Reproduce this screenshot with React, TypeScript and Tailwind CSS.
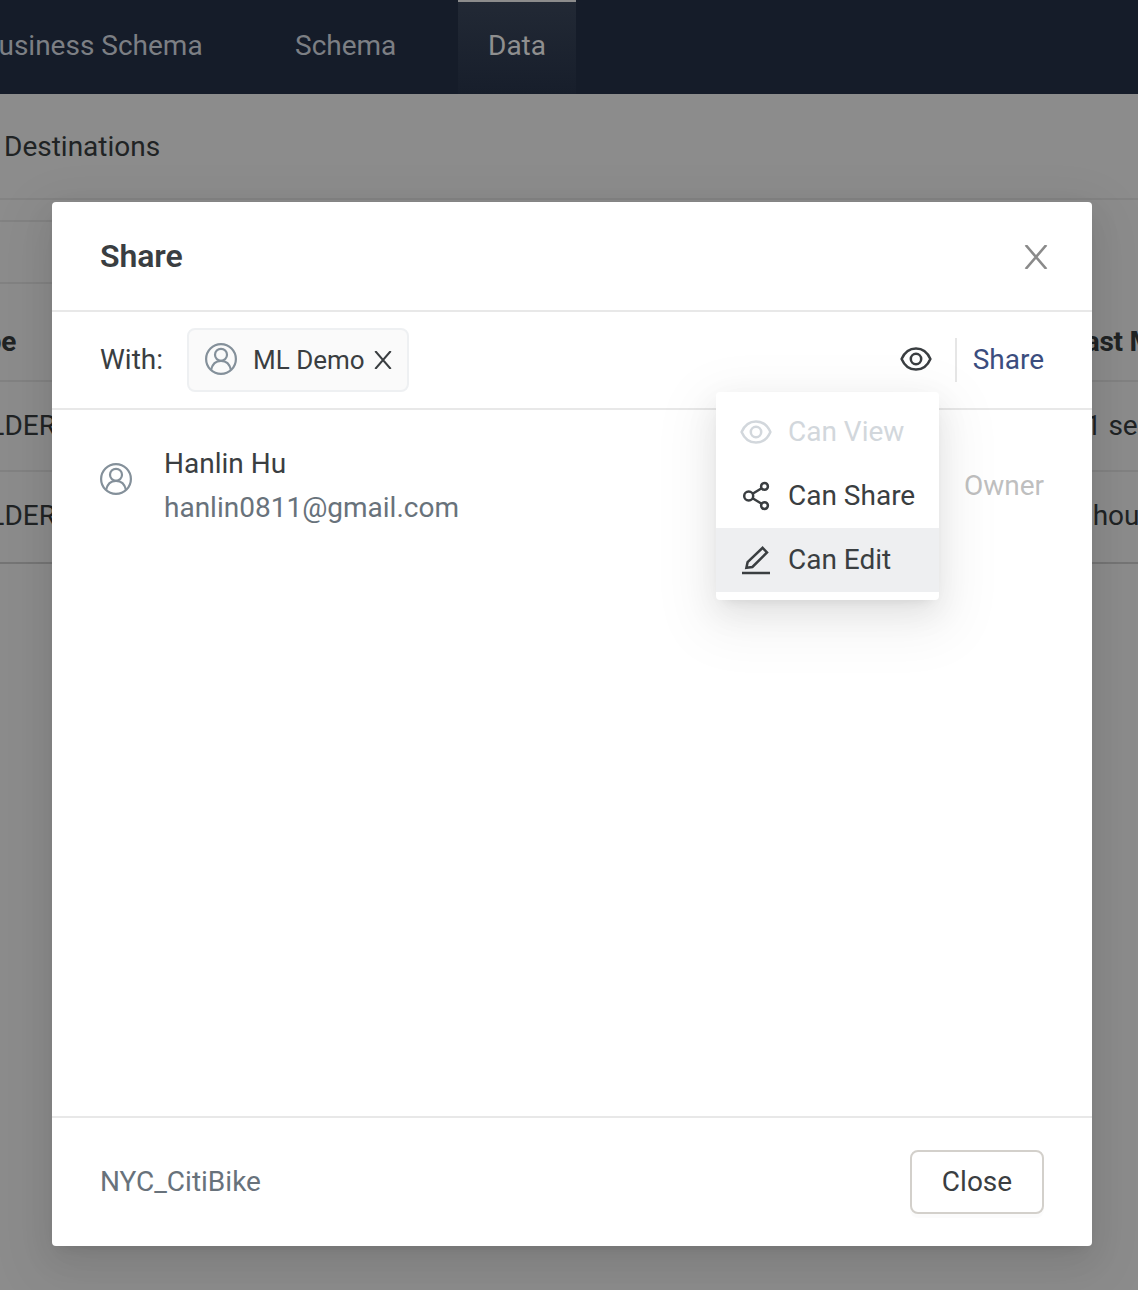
import React from "react";

function UserIcon() {
  return (
    <svg width="32" height="32" viewBox="0 0 32 32" fill="none" stroke="#84909a" strokeWidth="2.2" className="shrink-0">
      <circle cx="16" cy="16" r="14.900" />
      <circle cx="16" cy="11.800" r="6" />
      <path d="M6 27C7.200 21.400 11 17.800 16 17.800s8.800 3.600 10 9.200" />
    </svg>
  );
}

function EyeIcon() {
  return (
    <svg width="32" height="32" viewBox="0 0 32 32" fill="none" stroke="currentColor" strokeWidth="2.500" className="shrink-0">
      <path d="M1.600 16C4.600 9 10 5.400 16 5.400S27.400 9 30.400 16C27.400 23 22 26.600 16 26.600S4.600 23 1.600 16Z" strokeLinejoin="round" />
      <circle cx="16" cy="16" r="5.200" />
    </svg>
  );
}

function ShareIcon() {
  return (
    <svg width="32" height="32" viewBox="0 0 32 32" fill="none" stroke="currentColor" strokeWidth="2.500" className="shrink-0">
      <circle cx="8.700" cy="16" r="4.500" />
      <circle cx="24.500" cy="6.400" r="3.400" />
      <circle cx="24.500" cy="25.600" r="3.400" />
      <path d="M12.600 13.700 21.600 8.200M12.600 18.300 21.600 23.800" />
    </svg>
  );
}

function EditIcon() {
  return (
    <svg width="32" height="32" viewBox="0 0 32 32" fill="none" stroke="currentColor" strokeWidth="2.500" className="shrink-0">
      <path d="M22.600 3.800 27 8.400 12.400 23 6.400 23.800 7.600 18.200Z" />
      <path d="M2 29H30" />
    </svg>
  );
}

function CloseIcon({ size, w }: { size: number; w: number }) {
  return (
    <svg width={size} height={size} viewBox="0 0 24 24" fill="none" stroke="currentColor" strokeWidth={w} className="shrink-0">
      <path d="M1.700 0 22.300 24M22.300 0 1.700 24" />
    </svg>
  );
}

function Row({ left, right, cls }: { left: string; right: string; cls: string }) {
  return (
    <div className={`flex items-center justify-between whitespace-nowrap ${cls}`}>
      <span className="flex w-[56px] justify-end">{left}</span>
      <span className="w-[68px]">{right}</span>
    </div>
  );
}

function Backdrop() {
  return (
    <div className="flex h-full flex-col text-[#202324]">
      <nav className="flex h-[94px] shrink-0 bg-[#151c29] text-[#7c7f84]">
        <div className="flex w-[232px] items-center pb-[2px]">
          <span className="-ml-[19px] whitespace-nowrap">Business Schema</span>
        </div>
        <div className="flex w-[226px] items-center pb-[2px] pl-[63px]">Schema</div>
        <div className="flex w-[118px] items-center justify-center border-t-2 border-[#8c8c8c] bg-linear-to-b from-[#222935] to-[#171e2b] pb-1 text-[#8f8f8f]">Data</div>
      </nav>
      <div className="flex h-[106px] shrink-0 items-center border-b-2 border-[#838383] pl-1 pt-[2px]">Destinations</div>
      <div className="mt-5 h-16 w-[700px] shrink-0 border-y-2 border-[#828282]" />
      <Row left="Type" right="Last Modified" cls="-ml-10 h-[98px] shrink-0 border-b-2 border-[#828282] pt-5 font-bold tracking-[-0.3px]" />
      <Row left="FOLDER" right="21 seconds" cls="h-[90px] shrink-0 border-b-2 border-[#828282]" />
      <Row left="FOLDER" right="2 hours ago" cls="h-[92px] shrink-0 border-b-2 border-[#757575] pb-[2px]" />
    </div>
  );
}

function Menu() {
  return (
    <div className="absolute right-[105px] top-[54px] h-[208px] w-[223px] rounded-[4px] bg-white py-2 shadow-[0_6px_12px_-8px_rgba(0,0,0,0.12),0_12px_32px_0_rgba(0,0,0,0.08),0_18px_56px_16px_rgba(0,0,0,0.05)]">
      <div className="flex h-16 items-center gap-4 whitespace-nowrap px-6 text-[#d2d7dc]"><EyeIcon />Can View</div>
      <div className="flex h-16 items-center gap-4 whitespace-nowrap px-6"><ShareIcon />Can Share</div>
      <div className="flex h-16 items-center gap-4 whitespace-nowrap bg-[#eeeff1] px-6"><EditIcon />Can Edit</div>
    </div>
  );
}

function Modal() {
  return (
    <div className="flex h-[1044px] w-[1040px] flex-col rounded-[4px] bg-white text-[#3a3e41] shadow-[0_6px_12px_-8px_rgba(0,0,0,0.12),0_12px_32px_0_rgba(0,0,0,0.08),0_18px_56px_16px_rgba(0,0,0,0.05)]">
      <header className="flex h-[110px] shrink-0 items-center justify-between border-b-2 border-[#e8e8e8] pl-12 pr-11">
        <h1 className="text-[32px] font-semibold tracking-[-0.1px]">Share</h1>
        <button className="pt-[2px] text-[#8a8a8a]"><CloseIcon size={24} w={2.6} /></button>
      </header>
      <div className="flex h-[98px] shrink-0 items-center border-b-2 border-[#e8e8e8] px-12">
        <span className="w-[87px]">With:</span>
        <div className="flex h-16 w-[222px] items-center rounded-lg border-2 border-[#eef0f2] bg-[#fafafa] pl-4">
          <div className="-mt-[2px]"><UserIcon /></div>
          <span className="ml-4 w-[121px] whitespace-nowrap text-[26px]">ML Demo</span>
          <CloseIcon size={18} w={2.7} />
        </div>
        <div className="relative ml-auto flex h-11 items-center">
          <div className="-mt-[2px]"><EyeIcon /></div>
          <div className="ml-[23px] h-11 w-[2px] bg-[#e6e6e6]" />
          <button className="ml-4 text-[#3b4d7e]">Share</button>
          <Menu />
        </div>
      </div>
      <main className="flex grow justify-between px-12">
        <div className="flex">
          <div className="pt-[53px]"><UserIcon /></div>
          <div className="ml-8 pt-8 leading-[44px]">
            <div>Hanlin Hu</div>
            <div className="text-[#68727b]">hanlin0811@gmail.com</div>
          </div>
        </div>
        <span className="pt-[54px] leading-[44px] text-[#bfbfbf]">Owner</span>
      </main>
      <footer className="flex h-[130px] shrink-0 items-center justify-between border-t-2 border-[#e8e8e8] px-12">
        <span className="text-[#68727b]">NYC_CitiBike</span>
        <button className="h-16 w-[134px] rounded-lg border-2 border-[#d3d0cb] bg-white shadow-[0_4px_0_rgba(0,0,0,0.016)]">Close</button>
      </footer>
    </div>
  );
}

export default function App() {
  return (
    <div className="relative h-[1290px] w-[1138px] overflow-hidden bg-[#8c8c8c] font-[Roboto,sans-serif] text-[28px] leading-[44px]">
      <Backdrop />
      <div className="absolute inset-0 pl-[52px] pt-[202px]">
        <Modal />
      </div>
    </div>
  );
}
